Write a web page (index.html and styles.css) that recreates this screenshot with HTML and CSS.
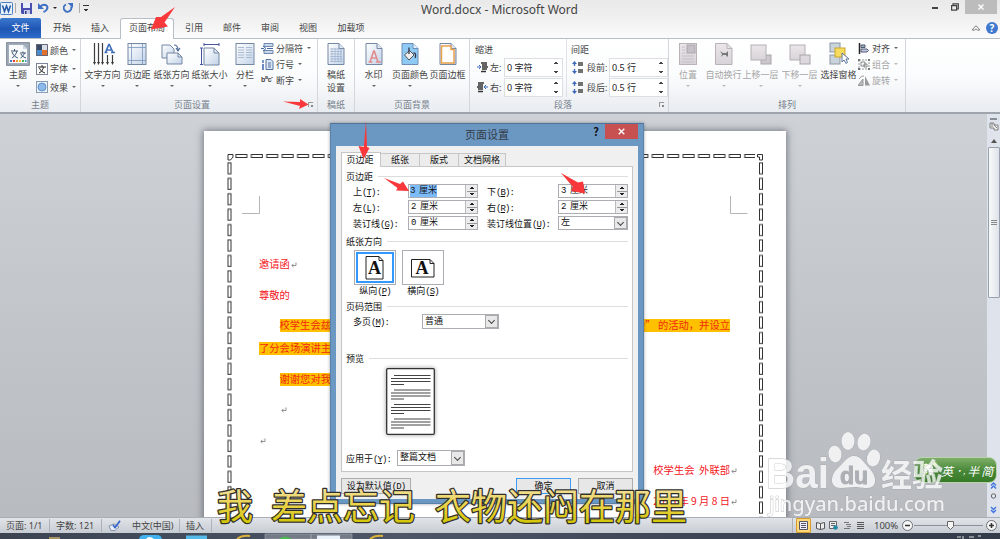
FILE: index.html
```html
<!DOCTYPE html>
<html lang="zh-CN">
<head>
  <meta charset="UTF-8">
  <meta name="viewport" content="width=device-width, initial-scale=1.0">
  <title>Word.docx - Microsoft Word</title>
  <link rel="stylesheet" href="styles.css">
</head>
<body>

  <!-- shared icons -->
  <svg class="defs" width="0" height="0">
    <defs>
      <linearGradient id="sheet" x1="0" y1="0" x2="1" y2="1">
        <stop offset="0" stop-color="#fff"/>
        <stop offset="1" stop-color="#c3d3e8"/>
      </linearGradient>
      <linearGradient id="dim" x1="0" y1="0" x2="0" y2="1">
        <stop offset="0" stop-color="#eae6e9"/>
        <stop offset="1" stop-color="#d8d3d8"/>
      </linearGradient>
      <symbol id="page" viewBox="0 0 18 24">
        <path d="M1 1.500h11l5 5v16H1z" fill="url(#sheet)" stroke="#7487a3"/>
        <path d="M12 1.500v5h5" fill="#dfe8f4" stroke="#7487a3"/>
      </symbol>
      <symbol id="spacing" viewBox="0 0 12 13">
        <path d="M2.500 0L5 3H3.200v2H1.800V3H0zM2.500 13L5 10H3.200V8H1.800v2H0z" fill="#3c69b8"/>
        <path d="M6 2h5M6 4h5M6 9h5M6 11h5" stroke="#444" stroke-width="1.300"/>
      </symbol>
      <symbol id="enter" viewBox="0 0 6 6">
        <path d="M5 .5v3H1M2.500 1.800L.8 3.500l1.700 1.700" fill="none" stroke="#777" stroke-width=".8"/>
      </symbol>
    </defs>
  </svg>

  <div class="window">
    <header class="titlebar">
      <div class="quick">
        <svg width="13" height="13" viewBox="0 0 13 13"><rect x=".5" y=".5" width="12" height="12" rx="1" fill="#e8f1fb" stroke="#4b7fc0"/><path d="M2.500 3.500l2 6 2-5.500 2 5.500 2-6" fill="none" stroke="#2458a8" stroke-width="1.500"/></svg>
        <i class="bar"></i>
        <svg class="save" width="11" height="11" viewBox="0 0 11 11"><path d="M0 0h11v11H1L0 10z" fill="#4a4fb0"/><path d="M2 0h7v5H2z" fill="#e8effa"/><path d="M3 7h6v4H3z" fill="#c6cce8"/><path d="M4 8h1.500v3H4z" fill="#333a80"/></svg>
        <svg class="undo" width="11" height="10" viewBox="0 0 11 10"><path d="M2 4c3-4 9-2 7 2-.5 1.500-2 2.500-3.500 3" fill="none" stroke="#3d70c4" stroke-width="2"/><path d="M0 0v6h6z" fill="#3d70c4"/></svg>
        <i class="caret dark"></i>
        <svg class="redo" width="10" height="10" viewBox="0 0 10 10"><path d="M3 1.500a3.800 3.800 0 1 0 5 2" fill="none" stroke="#3d70c4" stroke-width="1.900"/><path d="M4.500 0H10v5z" fill="#3d70c4"/></svg>
        <i class="bar"></i>
        <i class="more"></i>
      </div>
      <h1>Word.docx - Microsoft Word</h1>
      <div class="controls">
        <svg width="6" height="3"><rect y="1" width="6" height="2" fill="#444"/></svg>
        <svg width="8" height="8" viewBox="0 0 8 8"><path d="M2 2V.8h5.300V6H6M.6 2.600h5v4.600h-5z" fill="none" stroke="#444" stroke-width="1.200"/></svg>
        <span class="close"><svg width="6" height="6" viewBox="0 0 6 6"><path d="M.5.5l5 5M5.500.5l-5 5" stroke="#fff" stroke-width="1.400"/></svg></span>
      </div>
    </header>

    <nav class="tabs">
      <span class="tab file">文件</span>
      <span class="tab">开始</span>
      <span class="tab">插入</span>
      <span class="tab active">页面布局</span>
      <span class="tab">引用</span>
      <span class="tab">邮件</span>
      <span class="tab">审阅</span>
      <span class="tab">视图</span>
      <span class="tab wide">加载项</span>
      <span class="help">
        <svg width="8" height="6" viewBox="0 0 8 6"><path d="M.7 4L4 .8 7.300 4v1.200H5.500L4 3.700 2.500 5.200H.7z" fill="#fff" stroke="#666" stroke-width=".9"/></svg>
        <b>?</b>
      </span>
    </nav>

    <section class="ribbon">
      <div class="group g-theme">
        <div class="body">
          <div class="big">
            <svg width="24" height="24" viewBox="0 0 24 24"><rect x=".7" y=".7" width="22.600" height="22.600" fill="#a3aebb" stroke="#76818f"/><path d="M3 3h14l4 4v14H3z" fill="#f8fafc"/><path d="M17 3v4h4" fill="#cbd8e8"/><path d="M5 9h7M8.500 7v2M6 16c3-2 4-4 5-7M6 10c1 3 3 5 6 6M14 11h6M17 9.500V11M14.500 16c2-1 3-3 4-5M15 12c1 2 2 3 5 4" fill="none" stroke="#3f5877"/><path d="M4 19h2" stroke="#4575c4" stroke-width="2"/><path d="M7 19h2" stroke="#e33" stroke-width="2"/><path d="M10 19h2" stroke="#f79a25" stroke-width="2"/><path d="M13 19h2" stroke="#fb3" stroke-width="2"/><path d="M16 19h2" stroke="#5a5" stroke-width="2"/><path d="M19 19h1.500" stroke="#39c" stroke-width="2"/></svg>
            <span>主题</span><i class="caret"></i>
          </div>
          <div class="smalls roomy">
            <div><svg width="12" height="12" viewBox="0 0 12 12"><path d="M0 0h6v6H0z" fill="#3a4a66"/><path d="M6 0h6v6H6z" fill="#d8dde6"/><path d="M0 6h6v6H0z" fill="#4a8bd0"/><path d="M6 6h6v6H6z" fill="#e5702c"/><path d="M.5.5h11v11H.5z" fill="none" stroke="#667"/></svg>颜色<i class="caret"></i></div>
            <div><svg width="12" height="12" viewBox="0 0 12 12"><rect x=".5" y=".5" width="11" height="11" fill="#fff" stroke="#7b8798"/><path d="M2 4h8M6 2v2M3 10c3-1 4-4 4.500-6M3.500 5c1 3 3 4 5.500 5" fill="none" stroke="#222"/></svg>字体<i class="caret"></i></div>
            <div><svg width="12" height="12" viewBox="0 0 12 12"><rect x=".5" y=".5" width="11" height="11" fill="#eef4fb" stroke="#8a9bb2"/><circle cx="6" cy="6" r="4" fill="#8dbae8" stroke="#5d92cc"/></svg>效果<i class="caret"></i></div>
          </div>
        </div>
        <footer>主题</footer>
      </div>

      <div class="group g-setup">
        <div class="body">
          <div class="big w37"><svg width="24" height="24" viewBox="0 0 24 24"><path d="M3.500 1v20M7.500 1v20M11.500 1v20M16.500 13v8M21.500 13v8" stroke="#3c3c3c" stroke-width="1.200"/><path d="M2 20h3l-1.500 3zM6 20h3l-1.500 3zM10 20h3l-1.500 3zM15 20h3l-1.500 3zM20 20h3l-1.500 3z" fill="#3c3c3c"/><path d="M14.500 10.500l3.300-8h.5l3.700 8M16 8h5M13.500 10.500h3M20 10.500h4" fill="none" stroke="#3f6fb8" stroke-width="1.700"/></svg><span>文字方向</span><i class="caret"></i></div>
          <div class="big w31"><svg width="20" height="24" viewBox="0 0 20 24"><rect x="1" y="1.500" width="18" height="21" fill="url(#sheet)" stroke="#7487a3"/><path d="M4.500 2v20M15.500 2v20M1 5.500h18M1 18.500h18" stroke="#7896bd" stroke-width=".8"/></svg><span>页边距</span><i class="caret"></i></div>
          <div class="big w38"><svg width="22" height="24" viewBox="0 0 22 24"><path d="M1 3h8l4 4v9H1z" fill="url(#sheet)" stroke="#7487a3"/><path d="M6 11h11l4 4v7H6z" fill="url(#sheet)" stroke="#7487a3"/><path d="M17 11v4h4" fill="none" stroke="#7487a3"/><path d="M13 3c3 0 4 2 4 5M15 6l2 3 2-3" fill="none" stroke="#51709c" stroke-width="1.200"/></svg><span>纸张方向</span><i class="caret"></i></div>
          <div class="big w39"><svg width="20" height="24" viewBox="0 0 20 24"><path d="M4 6h10l5 5v12H4z" fill="url(#sheet)" stroke="#7487a3"/><path d="M14 6v5h5" fill="none" stroke="#7487a3"/><path d="M4 2.500h15M4 1v3M19 1v3M1.500 6v17M0 6h3M0 22.500h3" stroke="#4755a0"/></svg><span>纸张大小</span><i class="caret"></i></div>
          <div class="big w31"><svg width="20" height="24" viewBox="0 0 20 24"><rect x="1" y="1.500" width="18" height="21" fill="url(#sheet)" stroke="#7487a3"/><path d="M3 5.500h6M3 8h6M3 10.500h6M3 13h6M3 15.500h6M11 5.500h6M11 8h6M11 10.500h6M11 13h6M11 15.500h6" stroke="#a9bcd6"/></svg><span>分栏</span><i class="caret"></i></div>
          <div class="smalls">
            <div><svg width="13" height="11" viewBox="0 0 13 11"><path d="M3 .5h9v3H3zM3 7.500h9v3H3z" fill="#c8d8ee" stroke="#7188ab"/><path d="M0 5.500h3M2 3l3 2.500L2 8M6 5.500h6" fill="none" stroke="#4169b0"/></svg>分隔符<i class="caret"></i></div>
            <div><svg width="13" height="11" viewBox="0 0 13 11"><path d="M5 .5h5l2 2v8H5z" fill="#dbe6f5" stroke="#5673a0"/><path d="M7 4h3M7 6h3M7 8h3" stroke="#5673a0"/><path d="M2 1v3M1 6h2M1 8h2M1 10h2" stroke="#3c63b2" stroke-width="1.300"/></svg>行号<i class="caret"></i></div>
            <div><span class="hyph">b<sup>a</sup>c<sup>-</sup></span>断字<i class="caret"></i></div>
          </div>
        </div>
        <footer>页面设置<i class="launch"></i></footer>
      </div>

      <div class="group g-grid">
        <div class="body">
          <div class="big"><svg width="18" height="24" viewBox="0 0 18 24"><use href="#page"/><path d="M3 7h12M3 9.500h12M3 12h12M3 14.500h12M3 17h12M3 19.500h12M5 6v14M8 6v14M11 6v14M14 7v13" stroke="#8fa6c8" stroke-width=".6"/></svg><span>稿纸<br>设置</span></div>
        </div>
        <footer>稿纸</footer>
      </div>

      <div class="group g-back">
        <div class="body">
          <div class="big w37"><svg width="18" height="24" viewBox="0 0 18 24"><use href="#page"/><path d="M5 20l3.700-11h.6L13 20M6 16h6M3.500 20h4M11 20h5" fill="none" stroke="#e08d8d" stroke-width="1.600"/></svg><span>水印</span><i class="caret"></i></div>
          <div class="big w36"><svg width="18" height="24" viewBox="0 0 18 24"><path d="M1 1.500h11l5 5v16H1z" fill="#8fcaf5" stroke="#6d8fb5"/><path d="M12 1.500v5h5" fill="#e4f1fc" stroke="#6d8fb5"/><path d="M3.500 13l5-4.500L13 13l-5 5z" fill="#eee" stroke="#555"/><path d="M8 12V5.500M12.500 11c2.500-.5 2.500 3 1.500 5" fill="none" stroke="#334" stroke-width="1.300"/></svg><span>页面颜色</span><i class="caret"></i></div>
          <div class="big w39"><svg width="18" height="24" viewBox="0 0 18 24"><use href="#page"/><path d="M2.500 4h9.500v3.500h3V21H2.500z" fill="#fff" stroke="#eda24c" stroke-width="1.500"/></svg><span>页面边框</span></div>
        </div>
        <footer>页面背景</footer>
      </div>

      <div class="group g-para">
        <div class="body">
          <div class="fields">
            <p>缩进</p>
            <div class="field"><svg width="11" height="11" viewBox="0 0 11 11"><path d="M4 1h6M5 3h5M5 5h6M5 7h5M4 9.500h5" stroke="#333" stroke-width="1.300"/><path d="M0 5h4M2 3l2 2-2 2" fill="none" stroke="#3c69b8"/></svg><label>左:</label><span class="spin">0 字符<i></i></span></div>
            <div class="field"><svg width="11" height="11" viewBox="0 0 11 11"><path d="M1 1h6M1 3h5M0 5h6M1 7h5M1 9.500h5" stroke="#333" stroke-width="1.300"/><path d="M11 5H7M9 3L7 5l2 2" fill="none" stroke="#3c69b8"/></svg><label>右:</label><span class="spin">0 字符<i></i></span></div>
          </div>
          <div class="fields second">
            <p>间距</p>
            <div class="field"><svg width="12" height="13"><use href="#spacing"/></svg><label>段前:</label><span class="spin">0.5 行<i></i></span></div>
            <div class="field"><svg width="12" height="13"><use href="#spacing"/></svg><label>段后:</label><span class="spin">0.5 行<i></i></span></div>
          </div>
        </div>
        <footer>段落<i class="launch"></i></footer>
      </div>

      <div class="group g-arrange">
        <div class="body">
          <div class="big w36 off"><svg width="18" height="24" viewBox="0 0 18 24"><rect x=".5" y="1.500" width="17" height="21" fill="url(#dim)" stroke="#b9b3b8"/><rect x="8" y="3" width="8" height="8" fill="#c5c0c8" stroke="#aaa5ad"/><path d="M3 5h3M3 8h3M3 11h3M3 14h12M3 17h12M3 20h12" stroke="#c5c0c4"/></svg><span>位置</span><i class="caret"></i></div>
          <div class="big w35 off"><svg width="18" height="24" viewBox="0 0 18 24"><path d="M.5 1.500H12l5 5v16H.5z" fill="url(#dim)" stroke="#b9b3b8"/><path d="M12 1.500v5h5" fill="none" stroke="#b9b3b8"/><path d="M5 9l3 2h3l2-2v5l-1 1-1-2H8l-2 2 1-3z" fill="#777"/></svg><span>自动换行</span><i class="caret"></i></div>
          <div class="big w39 off"><svg width="22" height="24" viewBox="0 0 22 24"><rect x="11" y="13" width="10" height="9" fill="#ccc7cc" stroke="#aaa5aa"/><rect x="1" y="3" width="15" height="15" fill="url(#dim)" stroke="#b5b0b5"/></svg><span>上移一层</span><i class="caret"></i></div>
          <div class="big w39 off"><svg width="22" height="24" viewBox="0 0 22 24"><rect x="1" y="3" width="15" height="15" fill="url(#dim)" stroke="#b5b0b5"/><rect x="11" y="13" width="10" height="9" fill="#dcd8dc" stroke="#aaa5aa"/></svg><span>下移一层</span><i class="caret"></i></div>
          <div class="big w39"><svg width="20" height="24" viewBox="0 0 20 24"><rect x="1" y="1" width="10" height="9" fill="#c9d3dc" stroke="#8c98a6"/><rect x="1" y="13" width="10" height="9" fill="#c9d3dc" stroke="#8c98a6"/><rect x="6" y="6" width="10" height="9" fill="#f9dc5e" stroke="#c9a52e"/><path d="M13 11v9l2-2 2 3.500 1.500-1L17 17h3z" fill="#fff" stroke="#4a6690" stroke-width=".9"/></svg><span>选择窗格</span></div>
          <div class="smalls">
            <div><svg width="12" height="11" viewBox="0 0 12 11"><path d="M1.500 0v11" stroke="#222" stroke-width="1.500"/><path d="M3 2h4v2.500H3z" fill="#9bb" stroke="#557"/><path d="M3 6h6l1.500 1.500L9 9H3z" fill="#bcd" stroke="#557"/></svg>对齐<i class="caret"></i></div>
            <div class="off"><svg width="12" height="11" viewBox="0 0 12 11"><path d="M1 1h10v9H1z" fill="none" stroke="#999" stroke-dasharray="2 1"/><path d="M3 3h4v4H3zM6 5h3v3H6z" fill="none" stroke="#888"/><path d="M0 0h2v2H0zM10 0h2v2h-2zM0 9h2v2H0zM10 9h2v2h-2z" fill="#777"/></svg>组合<i class="caret"></i></div>
            <div class="off"><svg width="12" height="11" viewBox="0 0 12 11"><path d="M0 10.500L5 4v6.500z" fill="#bbb" stroke="#999"/><path d="M7 10.500V1l5 9.500z" fill="#999"/><path d="M1 4c1-2 3-3 5-3" fill="none" stroke="#999"/></svg>旋转<i class="caret"></i></div>
          </div>
        </div>
        <footer>排列</footer>
      </div>
    </section>

    <main class="workspace">
      <div class="canvas">
        <article class="paper">
          <svg class="frame" width="581" height="387" viewBox="0 0 581 387">
            <defs>
              <pattern id="dashH" x="31" y="23" width="15.420" height="4" patternUnits="userSpaceOnUse"><rect x=".9" y=".5" width="11" height="3" fill="#fff" stroke="#333"/></pattern>
              <pattern id="dashV" x="23.500" y="31" width="4" height="15.420" patternUnits="userSpaceOnUse"><rect x=".5" y=".9" width="3" height="11" fill="#fff" stroke="#333"/></pattern>
              <pattern id="dashR" x="555" y="31" width="4" height="15.420" patternUnits="userSpaceOnUse"><rect x=".5" y=".9" width="3" height="11" fill="#fff" stroke="#333"/></pattern>
            </defs>
            <rect x="31" y="23" width="520" height="4" fill="url(#dashH)"/>
            <rect x="23.500" y="31" width="4" height="356" fill="url(#dashV)"/>
            <rect x="555" y="31" width="4" height="356" fill="url(#dashR)"/>
            <path d="M24 23.500h5v2.500l-2.500 3H24zM558.500 23.500h-5v2.500h2v3h3z" fill="#fff" stroke="#333"/>
            <path d="M55.500 65v17.500H38M526.500 65v17.500h17" fill="none" stroke="#b5b5b5"/>
          </svg>
          <p>邀请函<svg class="ret" width="6" height="6"><use href="#enter"/></svg></p>
          <p>尊敬的</p>
          <p class="indent tight"><mark><span>校学生会兹</span><span>会” 的活动，并设立</span></mark></p>
          <p><mark class="part">了分会场演讲主</mark></p>
          <p class="indent"><mark class="part">谢谢您对我</mark></p>
          <p class="indent"><svg class="ret" width="6" height="6"><use href="#enter"/></svg></p>
          <p><svg class="ret" width="6" height="6"><use href="#enter"/></svg></p>
          <p class="sign">校学生会&nbsp; 外联部<svg class="ret" width="6" height="6"><use href="#enter"/></svg></p>
          <p class="sign">2015 年 9 月 8 日<svg class="ret" width="6" height="6"><use href="#enter"/></svg></p>
        </article>
      </div>
      <aside class="scroll">
        <i class="split"></i>
        <svg class="ruler" width="10" height="9" viewBox="0 0 10 9"><path d="M1 1h4v2h4v5H5V6H1zM3 1v4M5 3l3 3" fill="#eee" stroke="#777" stroke-width=".9"/></svg>
        <i class="up"></i>
        <div class="thumb"><i></i></div>
        <svg class="browse" width="9" height="34" viewBox="0 0 9 34"><path d="M2 4.500l2.500-2.500L7 4.500M2 7.500L4.500 5 7 7.500M2 26l2.500 2.500L7 26M2 29l2.500 2.500L7 29" stroke="#3f73dd" stroke-width="1.400" fill="none"/><circle cx="4.500" cy="15" r="2.200" fill="none" stroke="#666"/></svg>
      </aside>
    </main>

    <footer class="status">
      <span class="s1">页面: 1/1</span>
      <span class="s2">字数: 121</span>
      <span class="s3"><svg width="13" height="11" viewBox="0 0 13 11"><path d="M1 6l5-2 5 3-4 3.500H3z" fill="#e9eef6" stroke="#8593ab"/><path d="M5 5l2 2.500L12 .7" fill="none" stroke="#3565c8" stroke-width="1.700"/></svg>中文(中国)</span>
      <span class="s4">插入</span>
      <div class="views">
        <b><svg width="9" height="9" viewBox="0 0 9 9"><path d="M.5.5h8v8h-8zM2 2.500h5M2 4.500h5M2 6.500h5" fill="#eef" stroke="#556"/></svg></b>
        <svg width="9" height="9" viewBox="0 0 9 9"><path d="M.5 1.500l4 1 4-1v6l-4 1-4-1zM4.500 2.500v6" fill="#eee" stroke="#555"/></svg>
        <svg width="9" height="9" viewBox="0 0 9 9"><path d="M.5.5h7v7h-7zM2 2.500h4M2 4.500h4" fill="#eee" stroke="#666"/><circle cx="6.500" cy="6.500" r="2.300" fill="#268aa5"/></svg>
        <svg width="9" height="9" viewBox="0 0 9 9"><path d="M1 1.500h5M3 3.500h5M4 5.500h4M1 7.500h6" stroke="#777"/></svg>
        <svg width="9" height="9" viewBox="0 0 9 9"><path d="M1 1.500h7M1 3.500h7M1 5.500h7M1 7.500h7" stroke="#555"/></svg>
      </div>
      <span class="percent">100%</span>
      <svg class="zoom" width="96" height="13" viewBox="0 0 96 13"><path d="M13 6.500h69" stroke="#8b9098"/><circle cx="6.500" cy="6.500" r="5" fill="#f7f7f7" stroke="#6d7177"/><path d="M4 6.500h5" stroke="#333" stroke-width="1.500"/><path d="M46.500 2.500h6v5l-3 3-3-3z" fill="#f5f5f5" stroke="#666"/><circle cx="90.500" cy="6.500" r="5" fill="#f7f7f7" stroke="#6d7177"/><path d="M88 6.500h5M90.500 4v5" stroke="#333" stroke-width="1.500"/></svg>
    </footer>

    <div class="taskbar">
      <svg width="1000" height="6" viewBox="0 0 1000 6"><path d="M265 1h46v5h-46zM311 1h41v5h-41z" fill="#747b87" stroke="#a3a9b2" stroke-width=".6"/><path d="M317 6V2.500h23V6z" fill="#e9f1fb"/><path d="M139 6q1-4 5-4h13q4 0 5 4z" fill="#3fb2ef"/><path d="M146 6q3-4 8 0z" fill="#fff"/><path d="M186 2.500h21V6h-21z" fill="#55bbea"/><path d="M49 4h11v2H49z" fill="#a89460"/><path d="M237 6q5-4 13-3M370 6q5-4 13-3" fill="none" stroke="#d9b33a" stroke-width="2"/><path d="M279 6q6-5 13 0z" fill="#49bb52"/><path d="M957 4h4M963 3v3M969 4h5M978 3h3" stroke="#ddd"/></svg>
    </div>
  </div>

  <div class="dialog">
    <div class="dialog-title">页面设置<span class="q">?</span><span class="x"><svg width="7" height="7" viewBox="0 0 7 7"><path d="M.7.7l5.600 5.600M6.300.7L.7 6.300" stroke="#fff" stroke-width="1.300"/></svg></span></div>
    <div class="client">
      <div class="dtabs"><span class="on">页边距</span><span>纸张</span><span>版式</span><span class="last">文档网格</span></div>
      <div class="panel">
        <h3>页边距</h3>
        <div class="margins">
          <label>上<kbd>(<u>T</u>):</kbd></label><span class="box spin2"><em>3 厘米</em><i></i></span>
          <label>下<kbd>(<u>B</u>):</kbd></label><span class="box spin2">3 厘米<i></i></span>
          <label>左<kbd>(<u>L</u>):</kbd></label><span class="box spin2">2 厘米<i></i></span>
          <label>右<kbd>(<u>R</u>):</kbd></label><span class="box spin2">2 厘米<i></i></span>
          <label>装订线<kbd>(<u>G</u>):</kbd></label><span class="box spin2">0 厘米<i></i></span>
          <label>装订线位置<kbd>(<u>U</u>):</kbd></label><span class="box drop">左<i></i></span>
        </div>
        <h3>纸张方向</h3>
        <div class="orient">
          <div class="chosen"><span><svg width="22" height="25" viewBox="0 0 22 25"><path d="M2 1.500h13l4 4V24H2z" fill="#fff" stroke="#222"/><path d="M15 1.500v4h4" fill="none" stroke="#222"/><text x="10.500" y="18.500">A</text></svg></span>纵向<kbd>(<u>P</u>)</kbd></div>
          <div><span><svg width="26" height="22" viewBox="0 0 26 22"><path d="M1.500 2.500H20l4 4V20H1.500z" fill="#fff" stroke="#222"/><path d="M20 2.500v4h4" fill="none" stroke="#222"/><text x="12" y="17">A</text></svg></span>横向<kbd>(<u>S</u>)</kbd></div>
        </div>
        <h3>页码范围</h3>
        <div class="pages"><label>多页<kbd>(<u>M</u>):</kbd></label><span class="box drop">普通<i></i></span></div>
        <h3>预览</h3>
        <svg class="preview" width="49" height="67" viewBox="0 0 49 67">
          <defs><g id="para"><path d="M8 0h36.500M5 3h39.500M5 6h39.500M5 9h13" stroke="#444" stroke-width="1.200"/></g></defs>
          <rect x=".7" y=".7" width="47.600" height="65.600" rx="1" fill="#fff" stroke="#333" stroke-width="1.300"/>
          <use href="#para" y="7.500"/><use href="#para" y="22"/><use href="#para" y="36.500"/><use href="#para" y="51"/>
        </svg>
        <div class="apply"><label>应用于<kbd>(<u>Y</u>):</kbd></label><span class="box drop">整篇文档<i></i></span></div>
      </div>
      <div class="buttons"><button type="button">设为默认值<kbd>(<u>D</u>)</kbd></button><button type="button" class="ok">确定</button><button type="button">取消</button></div>
    </div>
  </div>

  <div class="ime"><svg width="18" height="18" viewBox="0 0 18 18"><g fill="#f4f8ee"><circle cx="5" cy="5" r="2.500"/><circle cx="9" cy="7" r="3"/><circle cx="4" cy="11" r="2.500"/><circle cx="10" cy="12" r="2.500"/></g><path d="M1 3l3 2M12 3l3-2v4zM2 15l4-3" fill="#a5cf3c" stroke="#a5cf3c"/></svg><span>英</span><small>·,</small><span>半</span><span>简</span></div>

  <!-- watermark, subtitle and pointer arrows lie over everything -->
  <svg class="overlay" width="1000" height="539" viewBox="0 0 1000 539">
    <defs>
      <linearGradient id="gold" x1="0" y1="487" x2="0" y2="523" gradientUnits="userSpaceOnUse">
        <stop offset="0" stop-color="#f2dfa2"/>
        <stop offset=".5" stop-color="#ead34a"/>
        <stop offset="1" stop-color="#d3c605"/>
      </linearGradient>
    </defs>
    <g class="mark">
      <text class="bai" x="766" y="488" textLength="63" lengthAdjust="spacingAndGlyphs">Bai</text>
      <ellipse cx="835" cy="454" rx="6.500" ry="8.500" transform="rotate(-10 835 454)"/>
      <ellipse cx="848" cy="441" rx="6.500" ry="9"/>
      <ellipse cx="864" cy="442" rx="6.500" ry="8.500" transform="rotate(12 864 442)"/>
      <ellipse cx="873.500" cy="458" rx="6.500" ry="8.500" transform="rotate(14 873.500 458)"/>
      <path d="M854 456c7 0 10 7 15 12 8 8 9 20-2 20-6 0-8-1-13-1s-9 1-13 1c-12 0-11-13-3-20 6-5 9-12 16-12z"/>
      <text class="du" x="840" y="484">du</text>
      <text class="jy" x="881" y="486">经验</text>
      <text class="url" x="769" y="511" textLength="176">jingyan.baidu.com</text>
    </g>
    <g class="subtitle">
      <text x="217" y="520">我</text>
      <text x="271" y="520">差点忘记</text>
      <text x="435" y="520">衣物还闷在那里</text>
    </g>
    <g class="arrows">
      <polygon points="175,7 161,17 156,17 151,29.500 168,26.500 164.500,22.500"/>
      <polygon points="283,101.500 300,102 300,99 308.500,104.500 299,109 300,106"/>
      <polygon points="366,121 363.800,147 358.500,146 363.500,159 369.500,148 367,147"/>
      <polygon points="384,178 400,184 403,181.500 409,191 396,190.500 397.500,188"/>
      <polygon points="561,173 578,182.500 583,181.500 585,193.500 571,191 573,187"/>
    </g>
  </svg>

</body>
</html>
```
FILE: styles.css
```css
* {
  box-sizing: border-box;
}

body {
  margin: 0;
  width: 1000px;
  height: 539px;
  overflow: hidden;
  position: relative;
  font-family: "Noto Sans", "Noto Sans CJK SC", sans-serif;
  font-size: 9px;
  color: #444;
}

svg {
  display: block;
  flex-shrink: 0;
}

.defs {
  position: absolute;
}

i {
  display: block;
  flex-shrink: 0;
  font-style: normal;
}

.window {
  display: flex;
  flex-direction: column;
  height: 539px;
}

/* title bar */
.titlebar {
  height: 18px;
  display: flex;
  justify-content: space-between;
  background: linear-gradient(#e9e9ea, #f0f0f0);
}

.quick {
  width: 200px;
  height: 16px;
  display: flex;
  align-items: center;
}

.bar {
  width: 1px;
  height: 10px;
  margin: 0 2px;
  background: #aaa;
}

.save {
  margin-left: 3px;
}

.undo {
  margin: 0 4px 0 6px;
}

.redo {
  margin: 0 4px 0 6px;
}

.more {
  width: 6px;
  height: 7px;
  margin-left: 1px;
  border-top: 1px solid #333;
  background: linear-gradient(#333, #333) 50% 3px / 4px 1px no-repeat, linear-gradient(#333, #333) 50% 4px / 2px 1px no-repeat;
}

.titlebar h1 {
  margin: 0;
  font-size: 12px;
  line-height: 19px;
  font-weight: normal;
  font-family: "Noto Sans", sans-serif;
  color: #444;
}

.controls {
  width: 201px;
  display: flex;
  align-items: center;
  justify-content: flex-end;
  gap: 13px;
  height: 14px;
  padding-right: 3px;
}

.close {
  width: 32px;
  height: 14px;
  background: #bcbcbc;
  display: flex;
  align-items: center;
  justify-content: center;
  margin-left: -7px;
}

/* ribbon tabs */
.tabs {
  height: 21px;
  display: flex;
  background: linear-gradient(#f0f0f0, #fbfbfb);
  border-bottom: 1px solid #b8bec6;
}

.tab {
  width: 38px;
  line-height: 20px;
  text-align: center;
}

.tab.file {
  width: 41px;
  margin-right: 2px;
  color: #fff;
  background: linear-gradient(#3b78cf, #1f56b4 55%, #2d6bcb);
  border-radius: 2px 2px 0 0;
}

.tab.active {
  width: 54px;
  margin: 0 1px;
  height: 21px;
  background: #fff;
  border: 1px solid #b8bec6;
  border-bottom: 0;
  border-radius: 3px 3px 0 0;
  line-height: 18px;
}

.tab.wide {
  width: 48px;
}

.help {
  margin-left: auto;
  display: flex;
  align-items: center;
  gap: 6px;
  padding-right: 2px;
}

.help b {
  width: 12px;
  height: 12px;
  border-radius: 50%;
  background: #3f78cf;
  color: #fff;
  font-size: 10px;
  line-height: 12px;
  text-align: center;
}

/* ribbon */
.ribbon {
  height: 75px;
  display: flex;
  background: linear-gradient(#fff, #fbfcfd 50%, #e9ecf0);
  border-bottom: 2px solid #9da4ac;
}

.group {
  border-right: 1px solid #d3d7dc;
  display: flex;
  flex-direction: column;
}

.group .body {
  height: 58px;
  display: flex;
}

.group footer {
  height: 15px;
  line-height: 15px;
  text-align: center;
  color: #777f8c;
  position: relative;
}

.g-theme { width: 81px; }
.g-setup { width: 237px; }
.g-grid { width: 37px; }
.g-back { width: 115px; }
.g-para { width: 199px; }
.g-arrange { width: 237px; }

.g-setup .body { padding-left: 3px; }
.g-arrange .body { padding-left: 1px; }

.g-setup footer { padding-right: 14px; }

.big {
  width: 36px;
  padding-top: 3px;
  display: flex;
  flex-direction: column;
  align-items: center;
  text-align: center;
  line-height: 13px;
  white-space: nowrap;
}

.big span {
  margin: 2px 0 4px;
}

.w31 { width: 32px; }
.w35 { width: 35px; }
.w36 { width: 36px; }
.w37 { width: 37px; }
.w38 { width: 37px; }
.w39 { width: 39px; }

.off {
  color: #a5a5a5;
}

.caret {
  border: 2px solid transparent;
  border-top: 2.5px solid #666;
  border-bottom: 0;
}

.caret.dark {
  border-top-color: #222;
}

.off .caret {
  border-top-color: #bbb;
}

.smalls {
  padding-top: 1px;
}

.smalls > div {
  height: 16px;
  display: flex;
  align-items: center;
  gap: 2px;
}

.smalls.roomy {
  padding-top: 2px;
}

.smalls.roomy > div {
  height: 18.5px;
}

.smalls .caret {
  margin-left: 2px;
}

.hyph {
  width: 13px;
  font: bold 7px/10px "Liberation Sans", sans-serif;
  letter-spacing: -0.5px;
}

.hyph sup {
  font-size: 6px;
  line-height: 0;
}

.launch {
  position: absolute;
  right: 4px;
  top: 5px;
  width: 5px;
  height: 5px;
  border-top: 1px solid #999;
  border-left: 1px solid #999;
  background: linear-gradient(#888, #888) 100% 100% / 2px 2px no-repeat;
}

.g-para footer {
  padding-right: 12px;
}

.fields {
  padding: 3px 0 0 5px;
  width: 96px;
}

.fields.second {
  width: 102px;
  padding-left: 4px;
  border-left: 1px solid #dfe2e6;
}

.fields p {
  margin: 0;
  line-height: 16px;
  height: 15px;
}

.field {
  display: flex;
  align-items: center;
  height: 20px;
  padding-left: 2px;
}

.field label {
  margin-left: 2px;
  width: 14px;
}

.second .field {
  padding-left: 1px;
}

.second .field label {
  width: 22px;
  margin-left: 3px;
}

.spin {
  width: 59px;
  height: 19px;
  line-height: 17px;
  border: 1px solid #dcdfe3;
  background: #fff;
  color: #222;
  padding: 0 4px 0 2px;
  display: flex;
  justify-content: space-between;
  align-items: center;
}

.spin i {
  width: 4px;
  height: 11px;
  background:
    linear-gradient(#444, #444) 50% 0 / 2px 1px no-repeat,
    linear-gradient(#444, #444) 50% 1px / 4px 1px no-repeat,
    linear-gradient(#444, #444) 50% 9px / 4px 1px no-repeat,
    linear-gradient(#444, #444) 50% 10px / 2px 1px no-repeat;
}

/* document */
.workspace {
  height: 403px;
  display: flex;
  overflow: hidden;
}

.canvas {
  flex: 1;
  padding: 17px 0 0 204px;
  background: linear-gradient(#ced2d7, #c0c3c8 60%, #b8bbc0);
}

.paper {
  position: relative;
  width: 582px;
  height: 400px;
  padding: 118px 56px 0 55px;
  background: #fff;
  box-shadow: 0 0 7px 1px rgba(70, 75, 85, 0.65);
  color: #f4151c;
  font-family: "Noto Sans CJK SC", sans-serif;
  font-size: 10.3px;
}

.frame {
  position: absolute;
  left: 0;
  top: 0;
}

.paper p {
  position: relative;
  margin: 0;
  height: 30.6px;
  line-height: 30px;
  white-space: nowrap;
}

.paper .indent {
  padding-left: 20.500px;
}

.paper .tight {
  height: 22.800px;
}

.paper mark {
  display: flex;
  justify-content: space-between;
  height: 13px;
  line-height: 12px;
  background: #ffc000;
  color: #f02a10;
  position: relative;
  top: 9px;
}

.paper .part {
  width: 90px;
}

.ret {
  display: inline-block;
  margin-left: 1px;
}

.paper .sign {
  text-align: right;
  margin-right: -7px;
}

.scroll {
  width: 13px;
  display: flex;
  flex-direction: column;
  align-items: center;
  background: #dfe4ec;
}

.split {
  width: 7px;
  height: 2px;
  margin: 4px 0 1px;
  background: #888e98;
}

.ruler {
  margin: 1px 0 8px;
}

.up {
  border: 3.5px solid transparent;
  border-bottom: 4px solid #555;
  border-top: 0;
  margin-bottom: 4px;
}

.thumb {
  width: 12px;
  height: 151px;
  border: 1px solid #98a1ae;
  border-radius: 1px;
  background: linear-gradient(90deg, #f8f9fb, #dfe3e9);
  display: flex;
  align-items: center;
  justify-content: center;
}

.thumb i {
  width: 6px;
  height: 6px;
  background: repeating-linear-gradient(#888 0 1px, transparent 1px 2px);
}

.browse {
  margin-top: auto;
  margin-bottom: 2px;
}

/* status bar */
.status {
  height: 16px;
  display: flex;
  align-items: center;
  background: linear-gradient(#e1e4e8, #c7ccd3);
  border-top: 1px solid #a9aeb5;
  white-space: nowrap;
}

.status > span {
  line-height: 13px;
  border-right: 1px solid #adb2b9;
  padding-left: 6px;
}

.s1 { width: 50px; }
.s2 { width: 52px; }

.status .s3 {
  width: 78px;
  display: flex;
  align-items: center;
  gap: 11px;
}

.s4 { width: 32px; }

.views {
  margin-left: auto;
  display: flex;
  align-items: center;
  gap: 4.500px;
  padding-left: 3px;
  border-left: 1px solid #adb2b9;
}

.views b {
  padding: 2px;
  border: 1px solid #d79b30;
  background: #ffd978;
  border-radius: 1px;
}

.status .percent {
  width: 34px;
  border: 0;
  padding-left: 9px;
  font-size: 9.500px;
}

.zoom {
  margin: 0 3px 0 2px;
}

.taskbar {
  height: 6px;
  background: linear-gradient(90deg, #3c4452, #4c5666 40%, #3e4555 70%, #343b49);
}

/* page setup dialog */
.dialog {
  position: absolute;
  left: 330px;
  top: 123px;
  width: 314px;
  height: 381px;
  padding: 0 6px 5px;
  background: #6b97c3;
  border: 1px solid #5c82a9;
  border-top-color: #4f7297;
  box-shadow: 0 0 3px rgba(60, 70, 90, 0.5);
  color: #111;
  font-family: "Noto Sans CJK SC", sans-serif;
}

.dialog-title {
  height: 22px;
  line-height: 21px;
  text-align: center;
  font-size: 11px;
  color: #333b46;
  position: relative;
}

.dialog-title .q {
  position: absolute;
  right: 38px;
  top: -3px;
  font-weight: bold;
  color: #111;
}

.dialog-title .x {
  position: absolute;
  right: -1px;
  top: 0;
  width: 33px;
  height: 15px;
  background: #c75050;
  display: flex;
  align-items: center;
  justify-content: center;
}

.client {
  height: 353px;
  padding: 6px 5px 0;
  background: #f0f0f0;
  margin: 0 -1px;
}

.dtabs {
  display: flex;
  align-items: flex-end;
  height: 14px;
}

.dtabs span {
  height: 13px;
  line-height: 11px;
  width: 39px;
  text-align: center;
  background: #ececec;
  border: 1px solid #c6c6c6;
  border-left: 0;
  border-bottom: 0;
}

.dtabs .on {
  position: relative;
  height: 15px;
  width: 40px;
  line-height: 13px;
  margin-bottom: -1px;
  padding-right: 2px;
  background: #fff;
  border-left: 1px solid #c6c6c6;
}

.dtabs .last {
  width: 47px;
}

.panel {
  height: 306px;
  background: #fff;
  border: 1px solid #c6c6c6;
  padding: 2px 4px 0 4px;
}

.panel h3 {
  display: flex;
  align-items: center;
  gap: 5px;
  margin: 0;
  height: 14px;
  font-size: 9px;
  font-weight: normal;
}

.panel h3::after {
  content: "";
  flex: 1;
  height: 1px;
  background: #ddd;
}

kbd {
  font: 9px "Liberation Mono", monospace;
  letter-spacing: -0.9px;
}

u {
  text-underline-offset: 1px;
}

.margins {
  display: grid;
  grid-template-columns: 55px 81px 69px 70px;
  grid-auto-rows: 16px;
  padding-left: 7px;
  align-items: center;
  height: 51px;
}

.margins label:nth-of-type(even) {
  margin-left: -2px;
}

.box {
  display: flex;
  align-items: center;
  justify-content: space-between;
  height: 14px;
  width: 70px;
  border: 1px solid #abadb3;
  background: #fff;
  font-family: "Liberation Mono", "Noto Sans CJK SC", monospace;
  font-size: 9px;
  line-height: 12px;
  padding-left: 2px;
  word-spacing: -1.8px;
  white-space: nowrap;
}

.box em {
  font-style: normal;
  background: #7dbcfb;
  margin-left: -1px;
}

.spin2 i {
  width: 12px;
  height: 12px;
  background:
    linear-gradient(#222, #222) 50% 2px / 2px 1px no-repeat,
    linear-gradient(#222, #222) 50% 3px / 4px 1px no-repeat,
    linear-gradient(#999, #999) 50% 50% / 10px 1px no-repeat,
    linear-gradient(#222, #222) 50% 8px / 4px 1px no-repeat,
    linear-gradient(#222, #222) 50% 9px / 2px 1px no-repeat,
    #ececec;
  border: 1px solid #bbb;
  border-width: 0 0 0 1px;
}

.drop i {
  width: 13px;
  height: 100%;
  background: #e8e8e8;
  border: 1px solid #aaa;
  display: flex;
  align-items: center;
  justify-content: center;
}

.drop i::after {
  content: "";
  width: 4px;
  height: 4px;
  margin-top: -2px;
  border: solid #444;
  border-width: 0 1.300px 1.300px 0;
  transform: rotate(45deg);
}

.orient {
  display: flex;
  gap: 6px;
  padding: 2px 0 0 8px;
  height: 51px;
}

.orient div {
  width: 42px;
  text-align: center;
  line-height: 12px;
}

.orient span {
  display: flex;
  align-items: center;
  justify-content: center;
  height: 35px;
  border: 1px solid #abadb3;
}

.orient .chosen span {
  box-shadow: inset 0 0 0 1px #fff, inset 0 0 0 3px #3399ff;
}

.orient text {
  font: bold 18px "Liberation Serif", serif;
  text-anchor: middle;
  fill: #111;
}

.pages {
  display: flex;
  align-items: center;
  height: 38px;
  padding: 0 0 22px 7px;
}

.pages label {
  width: 69px;
}

.pages .box {
  width: 77px;
  height: 15px;
  margin-top: 1px;
}

.preview {
  margin: 3px 0 0 40px;
  filter: drop-shadow(0 0 2px rgba(0, 0, 0, 0.4));
}

.apply {
  display: flex;
  align-items: center;
  margin-top: 15px;
}

.apply label {
  width: 51px;
}

.apply .box {
  width: 68px;
  height: 16px;
}

.buttons {
  display: flex;
  padding-top: 6px;
  gap: 7px;
}

.buttons button {
  width: 55px;
  height: 16px;
  padding: 0;
  background: #e7e7e7;
  border: 1px solid #adadad;
  font: inherit;
  font-size: 9px;
  line-height: 14px;
  color: #111;
}

.buttons button:first-child {
  width: 70px;
  margin-right: auto;
}

.buttons .ok {
  border-color: #3c9cf5;
}

/* input method badge */
.ime {
  position: absolute;
  left: 914px;
  top: 457px;
  width: 83px;
  height: 26px;
  display: flex;
  align-items: center;
  gap: 2px;
  padding-left: 6px;
  border: 1px solid #b9d3ae;
  border-radius: 8px;
  background: linear-gradient(#7fae68, #4a8a3a 50%, #367a27);
  color: #fff;
  font-family: "Noto Sans CJK SC", sans-serif;
  font-size: 12px;
  font-style: italic;
}

.ime small {
  font-size: 8px;
}

.overlay {
  position: absolute;
  left: 0;
  top: 0;
}

.mark {
  fill: #fff;
  opacity: 0.78;
  stroke: #a5a8ac;
  stroke-width: 0.9px;
  paint-order: stroke;
}

.mark .bai {
  font: bold 42px "Liberation Sans", sans-serif;
}

.mark .du {
  font: bold 23px "Liberation Sans", sans-serif;
  fill: #a9acb1;
}

.mark .jy {
  font: bold 31px "Noto Sans CJK SC", sans-serif;
}

.mark .url {
  font: 500 20px "Noto Sans", sans-serif;
}

.subtitle {
  font: 400 36px "Noto Sans CJK SC", sans-serif;
  fill: url(#gold);
  stroke: #2f2f2c;
  stroke-width: 2.500px;
  stroke-linejoin: round;
  paint-order: stroke;
}

.arrows {
  fill: #f8383a;
}
```
